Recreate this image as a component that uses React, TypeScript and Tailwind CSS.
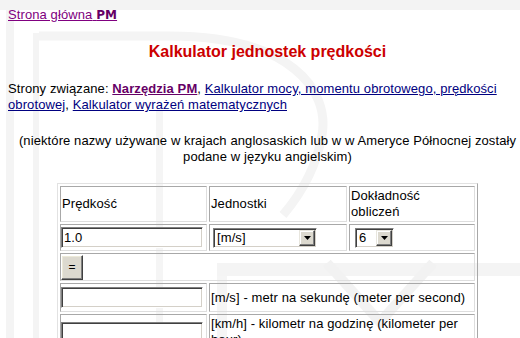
import React from 'react';

// faint "PM" watermark behind the page
function Watermark() {
  return (
    <svg className="absolute inset-0" width="520" height="338" viewBox="0 0 520 338" fill="none">
      <rect x="0" y="0" width="520" height="10" fill="#f3f3f3" />
      <rect x="6" y="10" width="8" height="328" fill="#f4f4f4" />
      <rect x="33" y="33" width="6" height="305" fill="#f4f4f4" />
      <path
        d="M39 36 H170 C290 36 330 90 322 135 C316 170 300 195 283 215"
        stroke="#f4f4f4"
        strokeWidth="9"
      />
      <rect x="156" y="110" width="7" height="228" fill="#f5f5f5" />
      <rect x="217" y="263" width="303" height="13" fill="#f4f4f4" />
      <rect x="217" y="276" width="10" height="62" fill="#f5f5f5" />
      <polyline points="327,263 380,322 433,263" stroke="#f2f2f2" strokeWidth="10" />
    </svg>
  );
}

function TextBox({ value = '' }: { value?: string }) {
  return (
    <div className="flex h-[21px] w-[142px] items-center border border-t-[#808080] border-l-[#808080] border-b-white border-r-white bg-white pl-[2px] shadow-[inset_1px_1px_0_#404040,inset_-1px_-1px_0_#d4d0c8]">
      {value}
    </div>
  );
}

function Select({ value, width }: { value: string; width: string }) {
  return (
    <div
      className={`flex h-[20px] ${width} items-stretch border border-t-[#808080] border-l-[#808080] border-b-white border-r-white bg-white p-[1px] shadow-[inset_1px_1px_0_#404040,inset_-1px_-1px_0_#d4d0c8]`}
    >
      <span className="flex flex-1 items-center pl-[2px]">{value}</span>
      <span className="flex w-[16px] items-center justify-center border border-t-[#e8e6de] border-l-[#e8e6de] border-b-[#404040] border-r-[#404040] bg-[#dcd9cf] shadow-[inset_-1px_-1px_0_#808080,inset_1px_1px_0_#ffffff]">
        <svg width="7" height="4" viewBox="0 0 7 4">
          <path d="M0 0 H7 L3.5 4 Z" fill="#000" />
        </svg>
      </span>
    </div>
  );
}

const cell =
  'flex items-center border border-t-[#a8a8a8] border-l-[#a8a8a8] border-b-[#dedede] border-r-[#dedede] px-[1px]';

export default function App() {
  return (
    <div className="relative h-[338px] w-[520px] overflow-hidden bg-white font-['Liberation_Sans',Arial,sans-serif] text-[13px] leading-[16px] tracking-[0.1px] text-black">
      <Watermark />
      <div className="relative w-[535px] px-[8px] pt-[7px]">
        <a className="text-[#800080] underline">
          Strona główna{' '}
          <b className="font-['DejaVu_Sans',sans-serif] text-[12px] font-bold text-[#660066]">PM</b>
        </a>

        <h1 className="mt-[20px] text-center text-[16px] font-bold leading-[18px] tracking-normal text-[#cc0000]">
          Kalkulator jednostek prędkości
        </h1>

        <p className="mt-[20px]">
          Strony związane: <a className="font-bold text-[#660066] underline">Narzędzia PM</a>,{' '}
          <a className="text-[#000080] underline">
            Kalkulator mocy, momentu obrotowego, prędkości obrotowej
          </a>
          , <a className="text-[#000080] underline">Kalkulator wyrażeń matematycznych</a>
        </p>

        <p className="mt-[20px] text-center">
          (niektóre nazwy używane w krajach anglosaskich lub w w Ameryce Północnej zostały
          <br />
          podane w języku angielskim)
        </p>

        <div className="mx-auto mt-[18px] grid w-[421px] grid-cols-[147px_138px_126px] gap-[2px] border border-t-[#e2e2e2] border-l-[#e2e2e2] border-b-[#a8a8a8] border-r-[#a8a8a8] p-[2px]">
          <div className={`${cell} h-[36px]`}>Prędkość</div>
          <div className={`${cell} h-[36px]`}>Jednostki</div>
          <div className={`${cell} h-[36px]`}>
            Dokładność
            <br />
            obliczeń
          </div>

          <div className={`${cell} h-[27px] pl-0`}>
            <TextBox value="1.0" />
          </div>
          <div className={`${cell} h-[27px]`}>
            <div className="ml-[2px]">
              <Select value="[m/s]" width="w-[104px]" />
            </div>
          </div>
          <div className={`${cell} h-[27px]`}>
            <div className="ml-[4px]">
              <Select value="6" width="w-[39px]" />
            </div>
          </div>

          <div className={`${cell} col-span-3 h-[28px] pl-0`}>
            <button className="flex h-[25px] w-[22px] items-center justify-center border border-t-white border-l-white border-b-[#404040] border-r-[#404040] bg-[#dcd9cf] text-[12px] shadow-[inset_-1px_-1px_0_#808080,inset_1px_1px_0_#ece9d8]">
              =
            </button>
          </div>

          <div className={`${cell} h-[29px] pl-0`}>
            <TextBox />
          </div>
          <div className={`${cell} col-span-2 h-[29px]`}>[m/s] - metr na sekundę (meter per second)</div>

          <div className={`${cell} pl-0`}>
            <TextBox />
          </div>
          <div className={`${cell} col-span-2 py-[1px]`}>
            [km/h] - kilometr na godzinę (kilometer per
            <br />
            hour)
          </div>
        </div>
      </div>
    </div>
  );
}
